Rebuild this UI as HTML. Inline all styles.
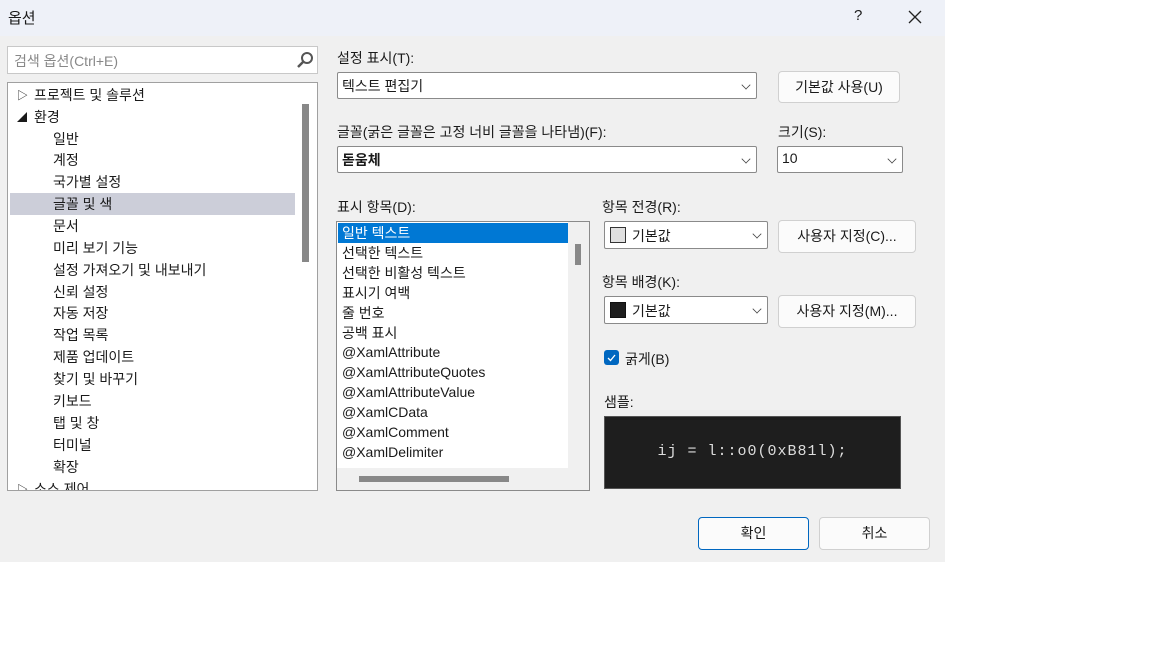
<!DOCTYPE html><html><head><meta charset="utf-8"><style>
*{margin:0;padding:0;box-sizing:border-box}
body{width:1152px;height:648px;background:#fff;font-family:"Segoe UI","Liberation Sans","Noto Sans CJK KR",sans-serif;font-size:14px;color:#1a1a1a;position:relative;overflow:hidden}
.a{position:absolute;white-space:nowrap}
#dlg{position:absolute;left:0;top:0;width:945px;height:562px;background:#f0f0f0}
#tb{position:absolute;left:0;top:0;width:945px;height:36px;background:#eef1f8}
.box{position:absolute;background:#fff;border:1px solid #a0a0a0}
.combo{position:absolute;background:#fff;border:1px solid #8a8a8a;border-radius:2px}
.btn{position:absolute;background:#fbfbfb;border:1px solid #d0d0d0;border-radius:4px;text-align:center;font-size:14px}
.chev{position:absolute;right:6px;top:8px;width:8px;height:8px;border-right:1.2px solid #444;border-bottom:1.2px solid #444;transform:rotate(45deg) scale(.8)}
.ti{position:absolute;left:53px;font-size:14px}
.li{position:absolute;left:5px;font-size:14px}
</style></head><body>
<div id="dlg">
<div id="tb"></div>
<div class="a" style="left:8px;top:7px;font-size:15px">옵션</div>
<div class="a" style="left:854px;top:7px;font-size:15px">?</div>
<svg class="a" style="left:908px;top:10px" width="14" height="14"><path d="M1 1L13 13M13 1L1 13" stroke="#222" stroke-width="1.3"/></svg>

<div class="box" style="left:7px;top:46px;width:311px;height:28px;border-color:#c8c8c8"></div>
<div class="a" style="left:14px;top:51px;color:#888">검색 옵션(Ctrl+E)</div>
<svg class="a" style="left:296px;top:51px" width="18" height="18"><circle cx="11" cy="7" r="5" fill="none" stroke="#555" stroke-width="2"/><path d="M7 11L2 16" stroke="#555" stroke-width="2.5"/></svg>

<div class="box" style="left:7px;top:82px;width:311px;height:409px;overflow:hidden">
<div class="a" style="left:2px;top:110px;width:285px;height:22px;background:#ccced9"></div>
<div class="a" style="left:294px;top:21px;width:7px;height:158px;background:#888"></div>
<div class="a" style="left:9px;top:4px;font-size:11px">▷</div><div class="a" style="left:26px;top:2px">프로젝트 및 솔루션</div>
<div class="a" style="left:9px;top:26px;font-size:10px">◢</div><div class="a" style="left:26px;top:24px">환경</div>
<div class="ti" style="left:45px;top:46px">일반</div>
<div class="ti" style="left:45px;top:67px">계정</div>
<div class="ti" style="left:45px;top:89px">국가별 설정</div>
<div class="ti" style="left:45px;top:111px">글꼴 및 색</div>
<div class="ti" style="left:45px;top:133px">문서</div>
<div class="ti" style="left:45px;top:155px">미리 보기 기능</div>
<div class="ti" style="left:45px;top:177px">설정 가져오기 및 내보내기</div>
<div class="ti" style="left:45px;top:199px">신뢰 설정</div>
<div class="ti" style="left:45px;top:220px">자동 저장</div>
<div class="ti" style="left:45px;top:242px">작업 목록</div>
<div class="ti" style="left:45px;top:264px">제품 업데이트</div>
<div class="ti" style="left:45px;top:286px">찾기 및 바꾸기</div>
<div class="ti" style="left:45px;top:308px">키보드</div>
<div class="ti" style="left:45px;top:330px">탭 및 창</div>
<div class="ti" style="left:45px;top:352px">터미널</div>
<div class="ti" style="left:45px;top:374px">확장</div>
<div class="a" style="left:9px;top:398px;font-size:11px">▷</div><div class="a" style="left:26px;top:396px">소스 제어</div>
</div>

<div class="a" style="left:337px;top:48px">설정 표시(T):</div>
<div class="combo" style="left:337px;top:72px;width:420px;height:27px"><div class="a" style="left:4px;top:3px">텍스트 편집기</div><div class="chev"></div></div>
<div class="btn" style="left:778px;top:71px;width:122px;height:32px;line-height:30px">기본값 사용(U)</div>

<div class="a" style="left:337px;top:122px">글꼴(굵은 글꼴은 고정 너비 글꼴을 나타냄)(F):</div>
<div class="combo" style="left:337px;top:146px;width:420px;height:27px"><div class="a" style="left:4px;top:3px;font-weight:bold">돋움체</div><div class="chev"></div></div>
<div class="a" style="left:778px;top:122px">크기(S):</div>
<div class="combo" style="left:777px;top:146px;width:126px;height:27px"><div class="a" style="left:4px;top:3px">10</div><div class="chev"></div></div>

<div class="a" style="left:337px;top:197px">표시 항목(D):</div>
<div class="box" style="left:336px;top:221px;width:254px;height:270px;border-color:#8a8a8a;overflow:hidden">
<div class="a" style="left:1px;top:1px;width:230px;height:20px;background:#0078d4"></div>
<div class="li" style="top:1px;color:#fff">일반 텍스트</div>
<div class="li" style="top:21px">선택한 텍스트</div>
<div class="li" style="top:41px">선택한 비활성 텍스트</div>
<div class="li" style="top:61px">표시기 여백</div>
<div class="li" style="top:81px">줄 번호</div>
<div class="li" style="top:101px">공백 표시</div>
<div class="li" style="top:122px">@XamlAttribute</div>
<div class="li" style="top:142px">@XamlAttributeQuotes</div>
<div class="li" style="top:162px">@XamlAttributeValue</div>
<div class="li" style="top:182px">@XamlCData</div>
<div class="li" style="top:202px">@XamlComment</div>
<div class="li" style="top:222px">@XamlDelimiter</div>
<div class="a" style="left:0;top:246px;width:252px;height:24px;background:#f0f0f0"></div>
<div class="a" style="left:231px;top:0;width:22px;height:246px;background:#f0f0f0"></div>
<div class="a" style="left:238px;top:22px;width:6px;height:21px;background:#888"></div>
<div class="a" style="left:22px;top:254px;width:150px;height:6px;background:#888"></div>
</div>

<div class="a" style="left:602px;top:197px">항목 전경(R):</div>
<div class="combo" style="left:604px;top:221px;width:164px;height:28px"><div class="a" style="left:5px;top:5px;width:16px;height:16px;background:#e0e0e0;border:1px solid #333"></div><div class="a" style="left:27px;top:4px">기본값</div><div class="chev"></div></div>
<div class="btn" style="left:778px;top:220px;width:138px;height:33px;line-height:31px">사용자 지정(C)...</div>
<div class="a" style="left:602px;top:272px">항목 배경(K):</div>
<div class="combo" style="left:604px;top:296px;width:164px;height:28px"><div class="a" style="left:5px;top:5px;width:16px;height:16px;background:#1e1e1e;border:1px solid #111"></div><div class="a" style="left:27px;top:4px">기본값</div><div class="chev"></div></div>
<div class="btn" style="left:778px;top:295px;width:138px;height:33px;line-height:31px">사용자 지정(M)...</div>

<div class="a" style="left:604px;top:350px;width:15px;height:15px;background:#0067c0;border-radius:3px"></div>
<svg class="a" style="left:604px;top:350px" width="15" height="15"><path d="M4 8L6.5 10.5L11 5" stroke="#fff" stroke-width="1.3" fill="none"/></svg>
<div class="a" style="left:625px;top:349px">굵게(B)</div>
<div class="a" style="left:604px;top:392px">샘플:</div>
<div class="a" style="left:604px;top:416px;width:297px;height:73px;background:#1e1e1e;border:1px solid #555"></div>
<div class="a" style="left:604px;top:443px;width:297px;text-align:center;color:#ddd;font-family:'Liberation Mono','DejaVu Sans Mono',monospace;font-size:15px;letter-spacing:1px">ij = l::o0(0xB81l);</div>

<div class="btn" style="left:698px;top:517px;width:111px;height:33px;line-height:30px;border:1.5px solid #0067c0">확인</div>
<div class="btn" style="left:819px;top:517px;width:111px;height:33px;line-height:31px">취소</div>
</div>
</body></html>
